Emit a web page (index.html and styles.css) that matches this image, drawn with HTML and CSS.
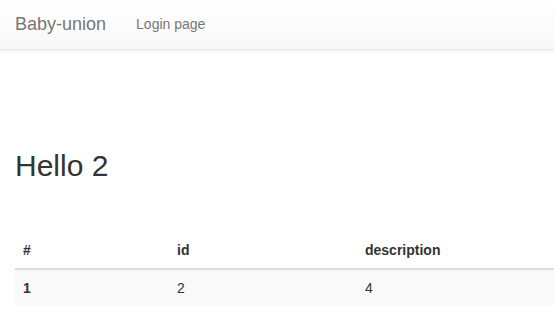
FILE: index.html
```html
<!DOCTYPE html>
<html lang="en">

<head>
  <meta charset="UTF-8" />
  <title>Baby-union</title>
  <link rel="stylesheet" href="styles.css">
</head>

<body>

  <!-- Navbar -->
  <nav class="navbar">
    <div class="container nav-inner">
      <a class="brand" href="#">Baby-union</a>
      <a class="nav-link" href="#">Login page</a>
    </div>
  </nav>

  <div class="container content">
    <h1>Hello 2</h1>
    <table class="data-table">
      <thead>
        <tr>
          <th class="col-num">#</th>
          <th class="col-id">id</th>
          <th>description</th>
        </tr>
      </thead>
      <tbody>
        <tr class="striped">
          <td class="bold">1</td>
          <td>2</td>
          <td>4</td>
        </tr>
      </tbody>
    </table>
  </div>

</body>

</html>
```

FILE: styles.css
```css
* {
  margin: 0;
  padding: 0;
  box-sizing: border-box;
}

body {
  font-family: "Liberation Sans", Arial, sans-serif;
  font-size: 14px;
  line-height: 20px;
  color: #333;
  background-color: #fff;
  width: 750px;
}

a {
  text-decoration: none;
}

.container {
  padding: 0 15px;
}

.navbar {
  height: 50px;
  background-image: linear-gradient(to bottom, #fff 0, #f8f8f8 100%);
  border-bottom: 1px solid #e7e7e7;
  box-shadow: 0 1px 5px rgba(0, 0, 0, 0.075);
}

.nav-inner {
  display: flex;
  align-items: center;
  height: 49px;
}

.brand {
  font-size: 18px;
  color: #777;
  padding-right: 15px;
  margin-top: -2px;
}

.nav-link {
  color: #777;
  padding-left: 15px;
  margin-top: -2px;
}

.content {
  padding-top: 99px;
}

h1 {
  font-size: 30px;
  font-weight: 500;
  line-height: 33px;
  margin-bottom: 50px;
}

.data-table {
  width: 720px;
  border-collapse: collapse;
  border-spacing: 0;
}

.data-table th,
.data-table td {
  padding: 8px;
  text-align: left;
  line-height: 20px;
}

.data-table th {
  font-weight: bold;
  border-bottom: 2px solid #ddd;
}

.col-num {
  width: 154px;
}

.col-id {
  width: 188px;
}

.striped {
  background-color: #f9f9f9;
}

.bold {
  font-weight: bold;
}
```
